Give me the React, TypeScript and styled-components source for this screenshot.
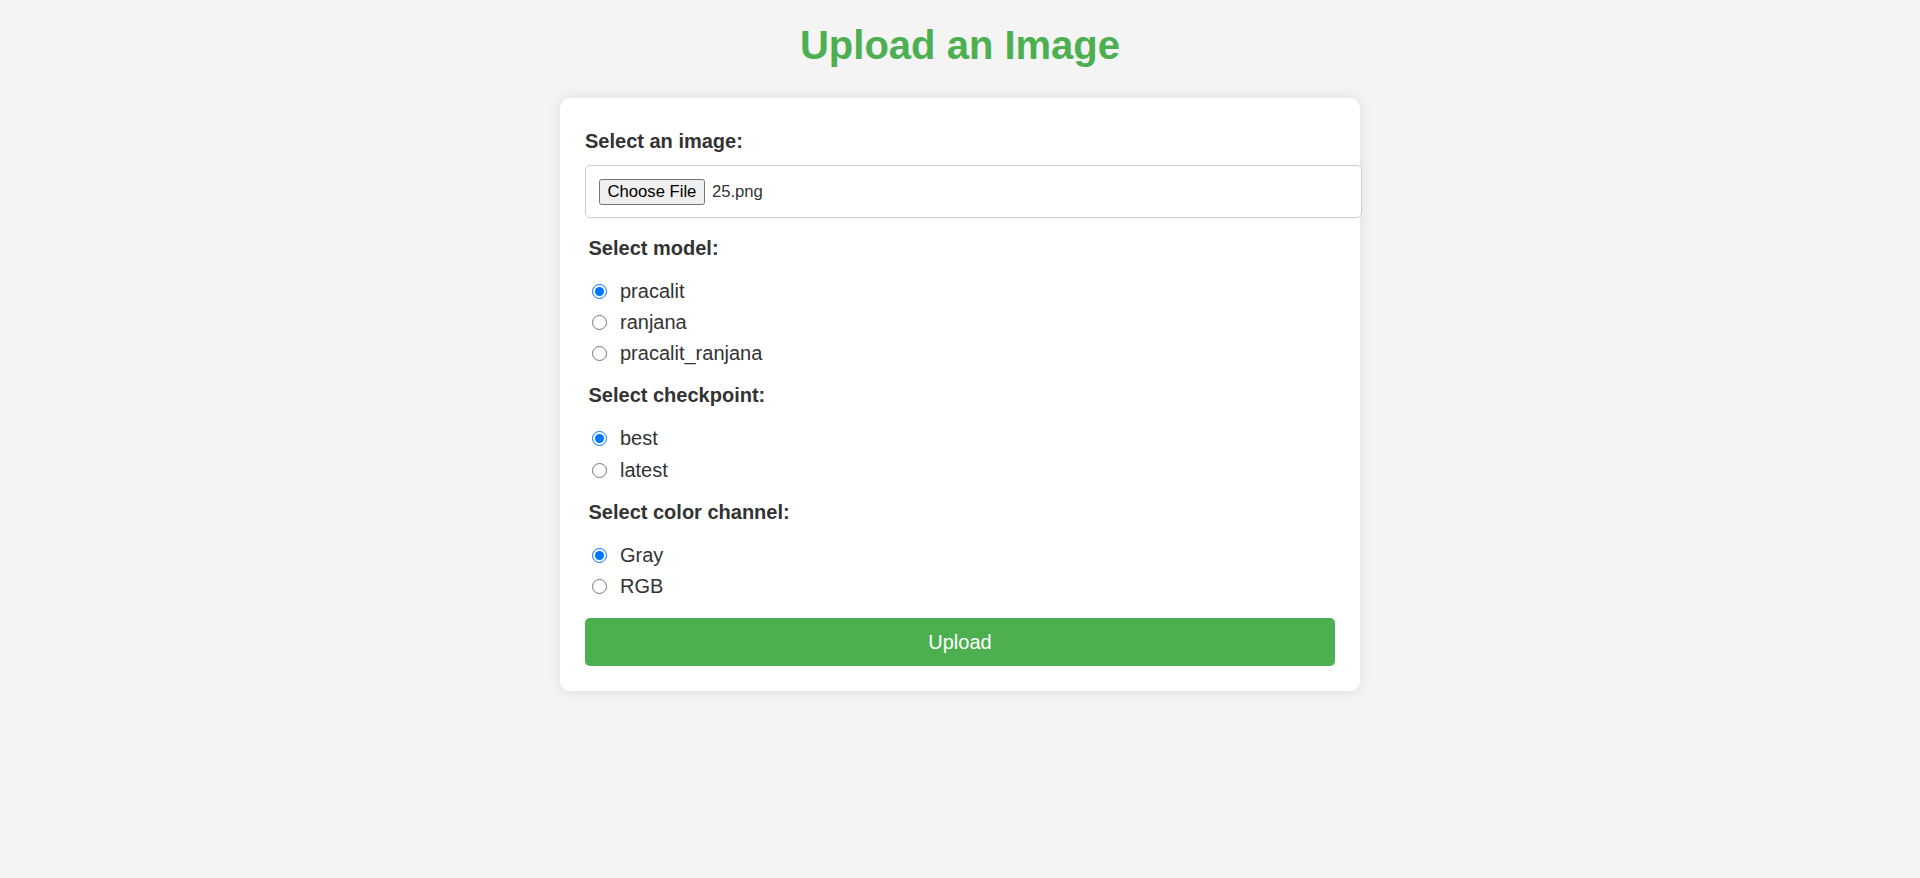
import React from 'react'
import styled, { createGlobalStyle } from 'styled-components'

// page is rendered at the 125% scale of the reference, so sizes are already multiplied
const GlobalStyle = createGlobalStyle`
  html, body {
    margin: 0;
    padding: 0;
  }
  body {
    background: #f4f4f4;
    font-family: "Liberation Sans", Arial, sans-serif;
    color: #333;
  }
`

const Page = styled.div`
  min-height: 100vh;
  display: flex;
  flex-direction: column;
  align-items: center;
`

const Title = styled.h1`
  margin: 22px 0 30px;
  font-size: 40px;
  line-height: 46px;
  font-weight: 700;
  color: #4caf50;
  text-align: center;
`

const Card = styled.form`
  width: 800px;
  box-sizing: border-box;
  padding: 25px;
  background: #fff;
  border-radius: 10px;
  box-shadow: 0 0 12.5px rgba(0, 0, 0, 0.1);
  display: flex;
  flex-direction: column;
`

const FieldLabel = styled.label`
  display: block;
  margin: 6.5px 0 12.5px;
  font-size: 20px;
  line-height: 23px;
  font-weight: 700;
  color: #333;
`

const FileBox = styled.div`
  width: 100%;
  height: 26px;
  padding: 12.5px;
  border: 1px solid #ccc;
  border-radius: 5px;
  display: flex;
  align-items: center;
  background: #fff;
`

const FileButton = styled.span`
  height: 26px;
  box-sizing: border-box;
  padding: 0 8px;
  margin-right: 6.5px;
  display: inline-flex;
  align-items: center;
  background: #efefef;
  border: 1px solid #767676;
  border-radius: 2.5px;
  font-size: 16.67px;
  color: #000;
`

const FileName = styled.span`
  font-size: 16.67px;
  color: #333;
`

const Group = styled.div`
  margin-top: 18.5px;
  padding-left: 3.5px;
`

const GroupTitle = styled.div`
  margin-bottom: 19px;
  font-size: 20px;
  line-height: 23px;
  font-weight: 700;
  color: #333;
`

const Options = styled.div`
  display: flex;
  flex-direction: column;
  gap: 6.2px;
`

const Option = styled.label`
  height: 25px;
  display: flex;
  align-items: center;
  font-size: 20px;
  color: #333;
  cursor: pointer;
`

const Radio = styled.input`
  width: 15px;
  height: 15px;
  margin: 0 13.5px 0 3px;
`

const UploadButton = styled.button`
  margin-top: 19px;
  width: 100%;
  height: 48px;
  border: none;
  border-radius: 5px;
  background: #4caf50;
  color: #fff;
  font-family: "Liberation Sans", Arial, sans-serif;
  font-size: 20px;
  cursor: pointer;
`

type RadioGroupProps = {
  title: string
  name: string
  options: string[]
  checked: string
}

function RadioGroup({ title, name, options, checked }: RadioGroupProps) {
  return (
    <Group>
      <GroupTitle>{title}</GroupTitle>
      <Options>
        {options.map((opt) => (
          <Option key={opt}>
            <Radio type="radio" name={name} value={opt} defaultChecked={opt === checked} />
            {opt}
          </Option>
        ))}
      </Options>
    </Group>
  )
}

export default function App() {
  return (
    <>
      <GlobalStyle />
      <Page>
        <Title>Upload an Image</Title>
        <Card onSubmit={(e) => e.preventDefault()}>
          <FieldLabel>Select an image:</FieldLabel>
          <FileBox>
            <FileButton>Choose File</FileButton>
            <FileName>25.png</FileName>
          </FileBox>
          <RadioGroup
            title="Select model:"
            name="model"
            options={['pracalit', 'ranjana', 'pracalit_ranjana']}
            checked="pracalit"
          />
          <RadioGroup title="Select checkpoint:" name="checkpoint" options={['best', 'latest']} checked="best" />
          <RadioGroup title="Select color channel:" name="channel" options={['Gray', 'RGB']} checked="Gray" />
          <UploadButton type="submit">Upload</UploadButton>
        </Card>
      </Page>
    </>
  )
}
